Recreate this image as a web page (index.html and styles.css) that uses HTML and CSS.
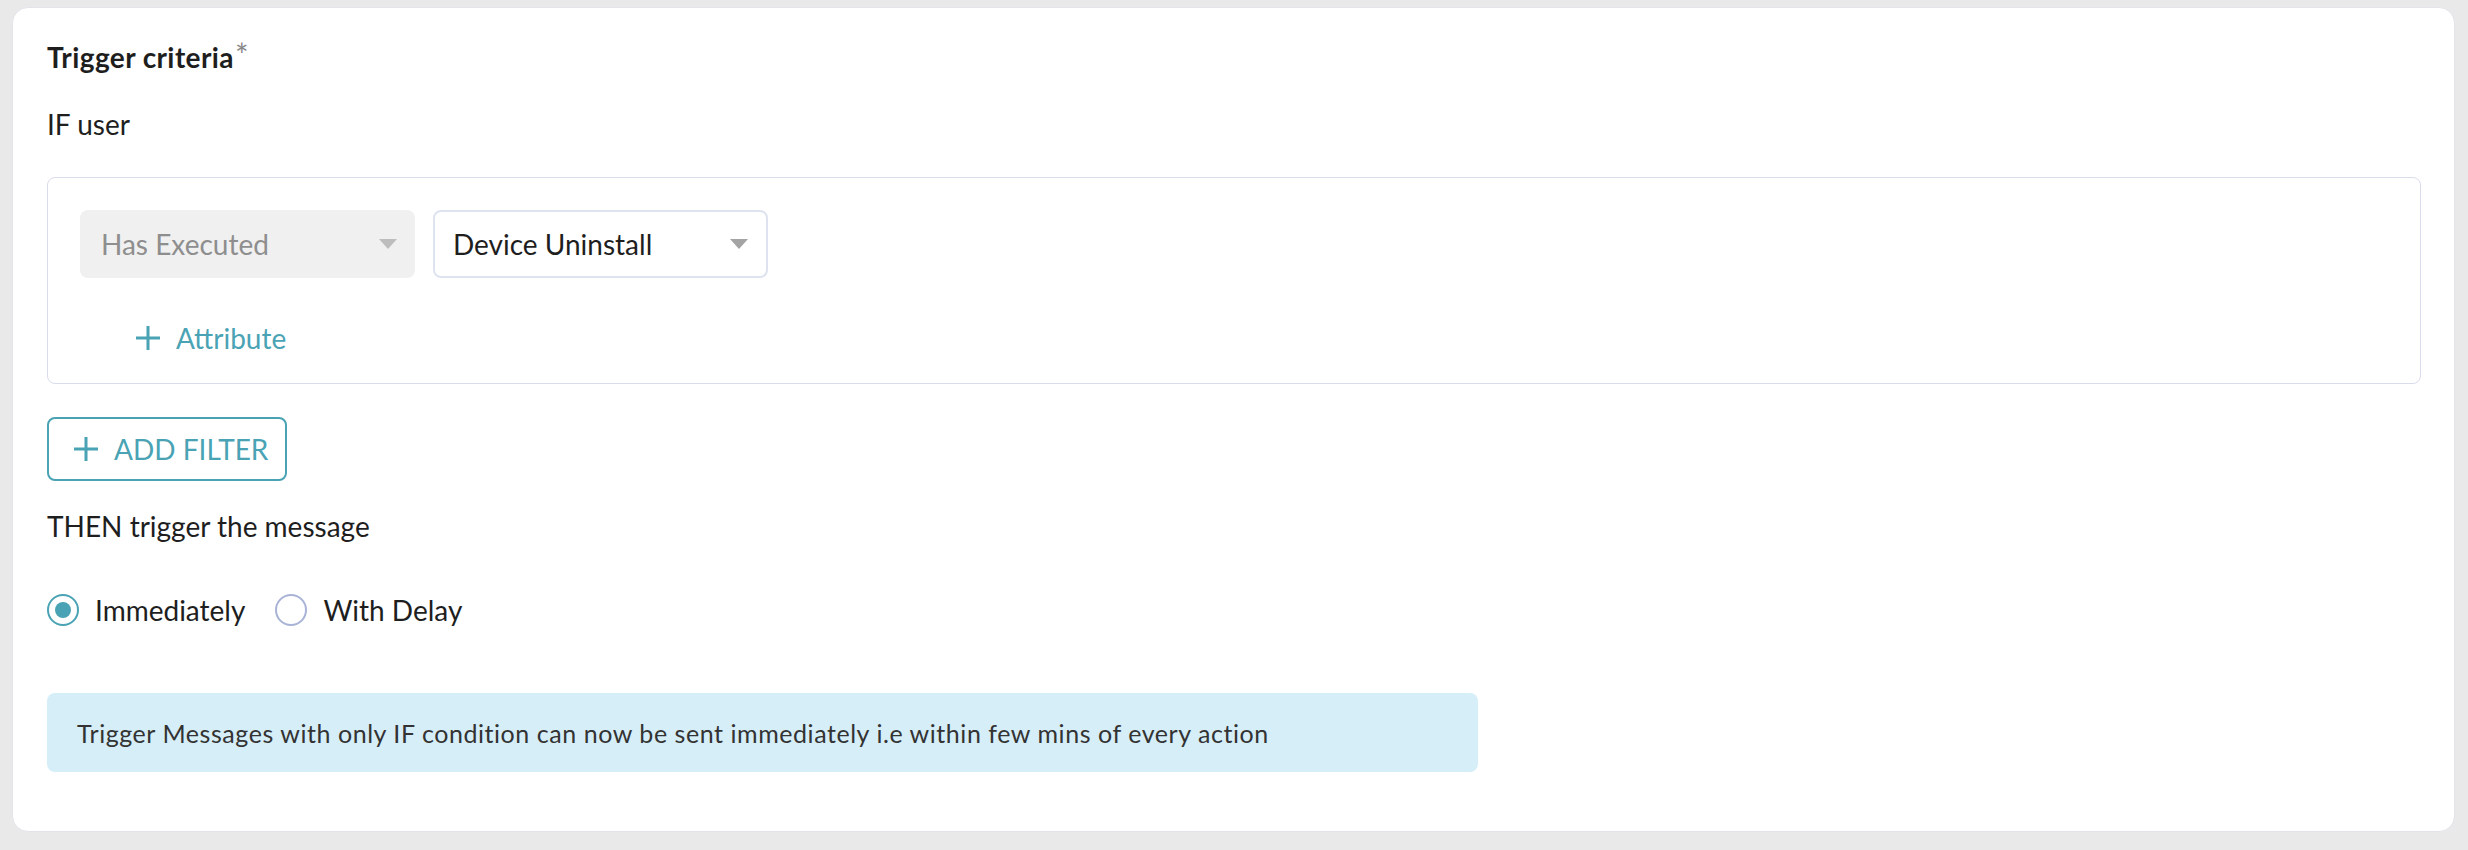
FILE: index.html
```html
<!DOCTYPE html>
<html lang="en">
<head>
<meta charset="utf-8">
<title>Trigger criteria</title>
<link rel="stylesheet" href="styles.css">
</head>
<body>
<section class="card">
  <h2 class="title">Trigger criteria<span class="req">*</span></h2>
  <p class="label if-label">IF user</p>

  <div class="condition">
    <div class="selects">
      <div class="select disabled">
        <span class="select-text">Has Executed</span>
        <span class="caret"></span>
      </div>
      <div class="select active">
        <span class="select-text">Device Uninstall</span>
        <span class="caret"></span>
      </div>
    </div>
    <div class="attr">
      <svg class="plus" viewBox="0 0 24 24" width="24" height="24"><path d="M12 0V24M0 12H24"/></svg>
      <span>Attribute</span>
    </div>
  </div>

  <button class="add-filter" type="button">
    <svg class="plus" viewBox="0 0 24 24" width="24" height="24"><path d="M12 0V24M0 12H24"/></svg>
    <span>ADD FILTER</span>
  </button>

  <p class="label then-label">THEN trigger the message</p>

  <div class="radios">
    <label class="radio">
      <span class="dot checked"></span>
      <span>Immediately</span>
    </label>
    <label class="radio">
      <span class="dot"></span>
      <span>With Delay</span>
    </label>
  </div>

  <div class="info">Trigger Messages with only IF condition can now be sent immediately i.e within few mins of every action</div>
</section>
</body>
</html>
```

FILE: styles.css
```css
* { box-sizing: border-box; }

html, body {
  margin: 0;
  background: #e9e9e9;
}

body {
  padding: 7px 13px 18px 12px;
  font-family: "Lato", "Noto Sans", sans-serif;
  color: #222222;
}

.card {
  background: #ffffff;
  border: 1px solid #e2e4ea;
  border-radius: 16px;
  padding: 29px 33px 59px 34px;
  min-height: 825px;
}

.title {
  margin: 0;
  height: 40px;
  font-size: 28px;
  line-height: 40px;
  font-weight: 700;
  letter-spacing: 0.4px;
  color: #1e1e1e;
}

.req {
  color: #8a8a8a;
  font-weight: 400;
  font-size: 32px;
  line-height: 0;
  letter-spacing: 0;
  margin-left: 1px;
  vertical-align: 1px;
}

.label {
  margin: 0;
  font-size: 28px;
  line-height: 40px;
  color: #1e1e1e;
}

.if-label { margin-top: 27px; }

.condition {
  margin-top: 33px;
  border: 1px solid #d9ddeb;
  border-radius: 8px;
  padding: 32px 32px 25px 32px;
}

.selects {
  display: flex;
  gap: 18px;
}

.select {
  width: 335px;
  height: 68px;
  border-radius: 8px;
  display: flex;
  align-items: center;
  justify-content: space-between;
  padding: 0 18px 0 20px;
  font-size: 28px;
}

.select.disabled {
  background: #f0f0f0;
  color: #8e8e8e;
  padding-left: 21px;
}

.select.active {
  background: #ffffff;
  border: 2px solid #dfe3ef;
  color: #1e1e1e;
  padding-left: 18px;
  padding-right: 18px;
}

.caret {
  width: 0;
  height: 0;
  border-left: 9px solid transparent;
  border-right: 9px solid transparent;
  border-top: 10px solid #bdbdbd;
}

.select.active .caret { border-top-color: #a4a4a4; }

.attr {
  margin-top: 40px;
  margin-left: 56px;
  display: flex;
  align-items: center;
  gap: 16px;
  height: 40px;
  font-size: 28px;
  color: #4aa3b4;
}

.plus {
  display: block;
  flex: none;
}

.plus path {
  stroke: #4aa3b4;
  stroke-width: 3;
  fill: none;
}

.add-filter {
  margin-top: 33px;
  width: 240px;
  height: 64px;
  border: 2px solid #4aa3b4;
  border-radius: 8px;
  background: #ffffff;
  display: flex;
  align-items: center;
  gap: 16px;
  padding: 0 0 0 25px;
  font-family: inherit;
  font-size: 28px;
  color: #4aa3b4;
  cursor: pointer;
}

.then-label { margin-top: 25px; }

.radios {
  margin-top: 44px;
  display: flex;
  gap: 30px;
  height: 40px;
}

.radio {
  display: flex;
  align-items: center;
  gap: 16px;
  font-size: 28px;
  color: #1e1e1e;
}

.dot {
  width: 32px;
  height: 32px;
  border-radius: 50%;
  border: 2.5px solid #a8b3d6;
  display: flex;
  align-items: center;
  justify-content: center;
  flex: none;
}

.dot.checked { border-color: #4aa3b4; }

.dot.checked::after {
  content: "";
  width: 16px;
  height: 16px;
  border-radius: 50%;
  background: #4aa3b4;
}

.info {
  margin-top: 63px;
  width: 1431px;
  height: 79px;
  border-radius: 8px;
  background: #d6eef8;
  display: flex;
  align-items: center;
  padding: 1px 30px 0 30px;
  font-size: 25px;
  letter-spacing: 0.55px;
  color: #333333;
}
```
